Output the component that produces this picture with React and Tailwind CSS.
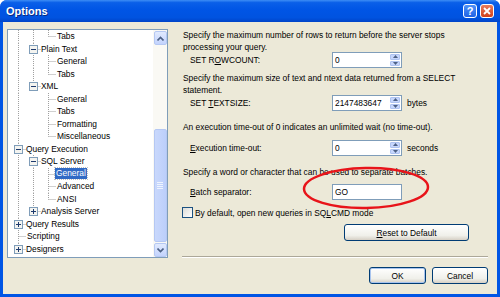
import React from "react";

const TREE = [
  { t: "Tabs", c: ["v", "v", "l"] },
  { t: "Plain Text", c: ["v", "t"], box: "-" },
  { t: "General", c: ["v", "v", "t"] },
  { t: "Tabs", c: ["v", "v", "l"] },
  { t: "XML", c: ["v", "l"], box: "-" },
  { t: "General", c: ["v", "n", "t"] },
  { t: "Tabs", c: ["v", "n", "t"] },
  { t: "Formatting", c: ["v", "n", "t"] },
  { t: "Miscellaneous", c: ["v", "n", "l"] },
  { t: "Query Execution", c: ["t"], box: "-" },
  { t: "SQL Server", c: ["v", "t"], box: "-" },
  { t: "General", c: ["v", "v", "t"], sel: true },
  { t: "Advanced", c: ["v", "v", "t"] },
  { t: "ANSI", c: ["v", "v", "l"] },
  { t: "Analysis Server", c: ["v", "l"], box: "+" },
  { t: "Query Results", c: ["t"], box: "+" },
  { t: "Scripting", c: ["t"] },
  { t: "Designers", c: ["l"], box: "+" },
];

function Cell({ type, box }) {
  const s = { stroke: "#A0A0A0", strokeWidth: 1, strokeDasharray: "1 1" };
  return (
    <svg width="15" height="12.5" className="shrink-0 block">
      {(type === "v" || type === "t") && <line x1="7.5" y1="0" x2="7.5" y2="12.5" {...s} />}
      {type === "l" && <line x1="7.5" y1="0" x2="7.5" y2="6.5" {...s} />}
      {(type === "t" || type === "l") && <line x1="7.5" y1="6.5" x2="15" y2="6.5" {...s} />}
      {box && (
        <g>
          <rect x="3.5" y="2.5" width="8" height="8" fill="#F4F4F0" stroke="#7F9DB9" />
          <line x1="5" y1="6.5" x2="10" y2="6.5" stroke="#1E3A6E" />
          {box === "+" && <line x1="7.5" y1="4" x2="7.5" y2="9" stroke="#1E3A6E" />}
        </g>
      )}
    </svg>
  );
}

function Arrow({ dir }) {
  return (
    <svg width="7" height="5" className="block">
      {dir === "up" ? (
        <path d="M0.5 4.5 L3.5 1.5 L6.5 4.5" fill="none" stroke="#4D6185" strokeWidth="1.6" />
      ) : (
        <path d="M0.5 0.5 L3.5 3.5 L6.5 0.5" fill="none" stroke="#4D6185" strokeWidth="1.6" />
      )}
    </svg>
  );
}

function ScrollBtn({ dir }) {
  return (
    <div className="h-[14px] w-[13px] mx-auto rounded-[2px] border border-[#B5C8F3] bg-[linear-gradient(to_bottom,#E1EAFE,#C3D3FD)] flex items-center justify-center">
      <Arrow dir={dir} />
    </div>
  );
}

function Spin() {
  return (
    <div className="w-[11px] h-full flex flex-col gap-[1px] py-[1px] pr-[1px]">
      <div className="flex-1 rounded-[1px] bg-[#C6D6FC] border border-[#AEC3F1] flex items-center justify-center">
        <svg width="5" height="3" className="block"><path d="M0 3 L2.5 0 L5 3 Z" fill="#4D6185" /></svg>
      </div>
      <div className="flex-1 rounded-[1px] bg-[#C6D6FC] border border-[#AEC3F1] flex items-center justify-center">
        <svg width="5" height="3" className="block"><path d="M0 0 L2.5 3 L5 0 Z" fill="#4D6185" /></svg>
      </div>
    </div>
  );
}

function Field({ label, value, spin, unit, className }) {
  return (
    <div className={"flex items-center h-[16px] " + className}>
      <div className="w-[150px] pl-[8px]">{label}</div>
      <div className="w-[70px] h-[16px] bg-white border border-[#7F9DB9] flex items-stretch">
        <div className="flex-1 pl-[2px] leading-[14px]">{value}</div>
        {spin && <Spin />}
      </div>
      {unit && <div className="ml-[5px]">{unit}</div>}
    </div>
  );
}

function XPButton({ children, className, def }) {
  return (
    <div
      className={
        "h-[17px] rounded-[3px] border border-[#003C74] bg-[linear-gradient(to_bottom,#FFFFFF,#F0F0EA_70%,#D6D0C5)] flex items-center justify-center " +
        (def ? "shadow-[inset_0_0_0_1px_#A8C4EE] " : "") +
        className
      }
    >
      {children}
    </div>
  );
}

export default function App() {
  return (
    <div className="w-[500px] h-[297px] bg-white font-['Liberation_Sans',Arial,sans-serif] text-[8.4px] text-black leading-[12px]">
      <div className="w-full h-full flex flex-col rounded-t-[7px] bg-[#0055E5] overflow-hidden">
        {/* Title bar */}
        <div className="h-[22px] shrink-0 flex items-center bg-[linear-gradient(to_bottom,#3D8DF5_0%,#0A5FE8_12%,#0055E5_45%,#0053E0_80%,#0044C8_100%)] pl-[6px] pr-[6px]">
          <div className="flex-1 text-white font-bold text-[11px] leading-[14px] [text-shadow:1px_1px_0_#0A2A80]">Options</div>
          <div className="w-[14px] h-[14px] rounded-[3px] border border-white bg-[linear-gradient(to_bottom,#4F92F8,#1F62E6)] flex items-center justify-center text-white font-bold text-[11px] leading-none">?</div>
          <div className="w-[14px] h-[14px] ml-[3px] rounded-[3px] border border-white bg-[linear-gradient(to_bottom,#E87D5E,#D0401A)] flex items-center justify-center">
            <svg width="8" height="8" className="block"><path d="M1 1 L7 7 M7 1 L1 7" stroke="white" strokeWidth="1.8" /></svg>
          </div>
        </div>
        {/* Body */}
        <div className="relative flex-1 mx-[3px] mb-[3px] bg-[#ECE9D8] pl-[4px] pt-[7px] pr-[9px] flex flex-col">
          <div className="flex">
            {/* Tree */}
            <div className="w-[161px] h-[229px] bg-white border border-[#7F9DB9] flex">
              <div className="flex-1 pl-[3px] pt-[0px] overflow-hidden">
                {TREE.map((r, i) => (
                  <div key={i} className="flex items-center h-[12.5px] whitespace-nowrap">
                    {r.c.map((c, j) => (
                      <Cell key={j} type={c} box={j === r.c.length - 1 ? r.box : undefined} />
                    ))}
                    {r.sel ? (
                      <span className="ml-[-1px] px-[1px] bg-[#316AC5] text-white outline-1 outline-dotted outline-[#C0C0C0] leading-[11px]">{r.t}</span>
                    ) : (
                      <span className={r.box ? "" : "ml-[1px]"}>{r.t}</span>
                    )}
                  </div>
                ))}
              </div>
              <div className="w-[14px] bg-[#FAF9F4] flex flex-col pt-[1px] pb-[0px]">
                <ScrollBtn dir="up" />
                <div className="flex-1 flex flex-col justify-end">
                  <div className="h-[113px] w-[13px] mx-auto mb-[1px] rounded-[2px] border border-[#B5C8F3] bg-[linear-gradient(to_right,#C9D8FC,#BCCFFB)] flex items-center justify-center">
                    <div className="flex flex-col gap-[1px]">
                      <div className="w-[6px] h-[1px] bg-[#EEF4FE]" />
                      <div className="w-[6px] h-[1px] bg-[#EEF4FE]" />
                      <div className="w-[6px] h-[1px] bg-[#EEF4FE]" />
                      <div className="w-[6px] h-[1px] bg-[#EEF4FE]" />
                    </div>
                  </div>
                </div>
                <ScrollBtn dir="down" />
              </div>
            </div>
            {/* Right panel */}
            <div className="w-[306px] ml-[14px] flex flex-col">
              <p className="pl-[1px]">
                Specify the maximum number of rows to return before the server stops
                <br />
                processing your query.
              </p>
              <Field className="mt-[-1px]" label={<>SET R<u>O</u>WCOUNT:</>} value="0" spin />
              <p className="pl-[1px] mt-[4px]">
                Specify the maximum size of text and ntext data returned from a SELECT
                <br />
                statement.
              </p>
              <Field className="mt-[-1px]" label={<>SET <u>T</u>EXTSIZE:</>} value="2147483647" spin unit="bytes" />
              <p className="pl-[1px] mt-[10px]">An execution time-out of 0 indicates an unlimited wait (no time-out).</p>
              <Field className="mt-[7px]" label={<><u>E</u>xecution time-out:</>} value="0" spin unit="seconds" />
              <p className="pl-[1px] mt-[10px]">Specify a word or character that can be used to separate batches.</p>
              <Field className="mt-[6px]" label={<><u>B</u>atch separator:</>} value="GO" />
              <div className="flex items-center mt-[7px] h-[11px]">
                <div className="w-[11px] h-[11px] border border-[#1C5180] bg-[linear-gradient(135deg,#DCDCD7,#FFFFFF)]" />
                <span className="ml-[2px]">By default, open new queries in SQ<u>L</u>CMD mode</span>
              </div>
              <div className="flex justify-end mt-[6px] pr-[19px]">
                <XPButton className="w-[125px]"><u>R</u>eset to Default</XPButton>
              </div>
              <div className="mt-[15px] h-[2px] border-t border-[#ACA899] border-b border-b-white" />
            </div>
          </div>
          {/* Bottom buttons */}
          <div className="flex justify-end gap-[6px] mt-[9px]">
            <XPButton def className="w-[57px]">OK</XPButton>
            <XPButton className="w-[56px]">Cancel</XPButton>
          </div>
          {/* Red annotation ellipse */}
          <svg className="absolute left-[297px] top-[142px] pointer-events-none" width="132" height="48">
            <ellipse cx="66" cy="24" rx="62" ry="20" fill="none" stroke="#E8141A" strokeWidth="2.5" transform="rotate(-1 66 24)" />
          </svg>
        </div>
      </div>
    </div>
  );
}
